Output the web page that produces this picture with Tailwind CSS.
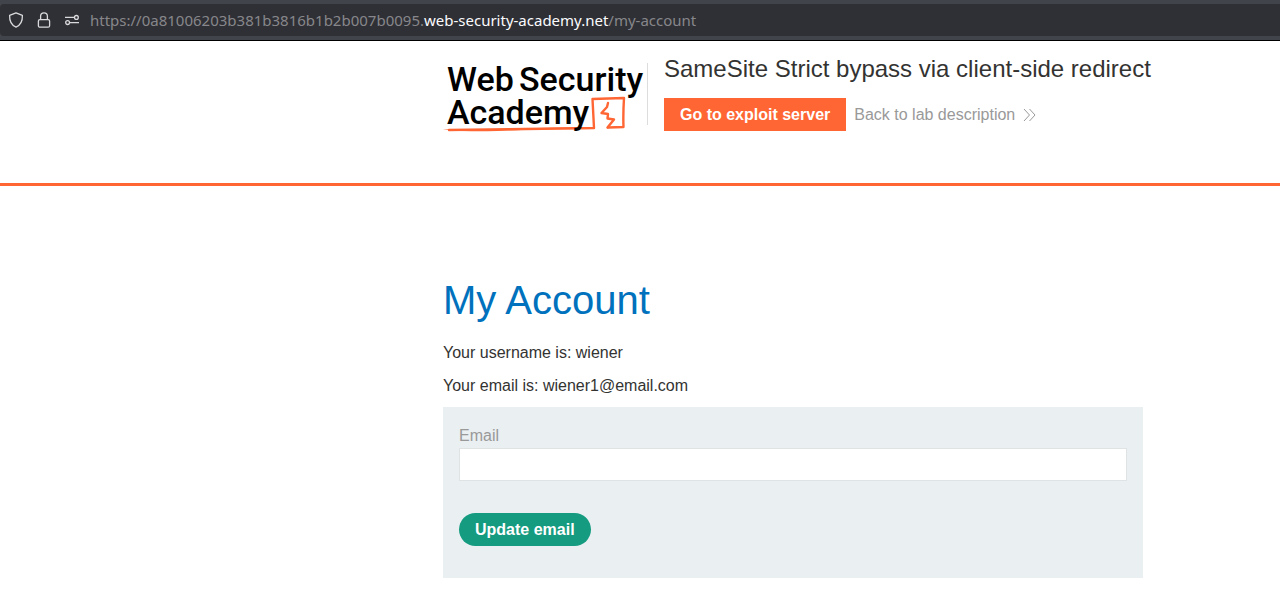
<!DOCTYPE html>
<html lang="en">
<head>
<meta charset="utf-8">
<meta name="viewport" content="width=device-width, initial-scale=1">
<title>SameSite Strict bypass via client-side redirect</title>
<script src="https://cdn.jsdelivr.net/npm/@tailwindcss/browser@4"></script>
</head>
<body class="bg-white text-base text-[#333332] font-['Liberation_Sans',Arial,sans-serif]">
<div class="border-b border-black bg-[#42444b] py-1">
  <div class="flex h-8 items-center rounded-l bg-[#2f3035] pl-2 text-[#dadadc]">
    <svg class="size-4 shrink-0" viewBox="0 0 16 16" fill="none" stroke="currentColor" stroke-width="1.3" stroke-linejoin="round" aria-hidden="true"><path d="M8 .8 14.4 3.3C14.6 8.7 12.6 13.2 8 15.2 3.4 13.2 1.4 8.7 1.6 3.3Z"/></svg>
    <svg class="ml-3 size-4 shrink-0" viewBox="0 0 16 16" fill="none" stroke="currentColor" stroke-width="1.3" aria-hidden="true"><rect x="2.4" y="7.6" width="11.2" height="7.6" rx="1.5"/><path d="M4.6 7.6V4.2a3.4 3.4 0 0 1 6.8 0v3.4"/></svg>
    <svg class="ml-3 size-4 shrink-0" viewBox="0 0 16 16" fill="none" stroke="currentColor" stroke-width="1.3" aria-hidden="true"><circle cx="12.4" cy="5.4" r="1.9"/><path d="M1 5.4h9.500M5.500 10.6H15"/><circle cx="3.6" cy="10.6" r="1.9"/></svg>
    <p class="ml-[10px] whitespace-nowrap text-[15px] text-[#87878b] font-['Noto_Sans',sans-serif]">https://0a81006203b381b3816b1b2b007b0095.<span class="text-[#fbfbfe]">web-security-academy.net</span>/my-account</p>
  </div>
</div>
<header class="border-b-3 border-[#ff6633]">
  <div class="ml-[443px] flex h-[142px] items-start pt-3">
    <a href="#" aria-label="Web Security Academy" class="mt-[10px] shrink-0 border-r border-[#dddddd]">
      <svg class="h-[62px] w-[204px] overflow-visible text-[34px] font-medium font-['Roboto',sans-serif]" viewBox="0 0 204 62">
        <g fill="#000"><text x="4" y="28">Web</text><text x="76" y="28">Security</text></g>
        <g fill="none" stroke="#ff6633" stroke-linejoin="round" stroke-linecap="round">
          <path stroke-width="2.400" d="M6 67Q55 66 151 65L149.500 36 181 35Q180 51 180.500 64L165 64.500"/>
          <path stroke-width="2.400" d="M165 40 164 44 158.500 50 165 51 164.500 55.500 171 56.500 164.500 64.500"/>
        </g>
        <path fill="#ff6633" d="M0 66Q15 67.500 70 65.500L151 64V66Q90 66 55 68Q10 69 0 66Z"/>
        <text x="4" y="61" fill="#000">Academy</text>
      </svg>
    </a>
    <div class="ml-4">
      <h2 class="text-2xl leading-8">SameSite Strict bypass via client-side redirect</h2>
      <div class="mt-[13px] flex items-center gap-2">
        <a href="#" class="bg-[#ff6633] px-4 py-1 font-bold leading-[25px] text-white">Go to exploit server</a>
        <a href="#" class="flex items-center gap-2 text-[#999999]">Back to lab description
          <svg class="h-3 w-[14px]" viewBox="0 0 14 12" fill="none" stroke="currentColor" stroke-width="1" aria-hidden="true"><path d="M1 0 6.500 6 1 12M6.500 0 12 6l-5.500 6"/></svg>
        </a>
      </div>
    </div>
  </div>
</header>
<main class="ml-[443px] mr-4 max-w-[700px] pt-[90px]">
  <h1 class="text-[40px] leading-12 text-[#0071bc]">My Account</h1>
  <p class="mt-4 leading-[25px]">Your username is: wiener</p>
  <p class="mt-2 leading-[25px]">Your email is: wiener1@email.com</p>
  <form class="mt-[9px] bg-[#eaeff2] px-4 pt-4 pb-8">
    <label for="email" class="block leading-[25px] text-[#999999]">Email</label>
    <input id="email" type="email" class="block h-[33px] w-full border border-[#e0e3e3] bg-white px-2">
    <button type="button" class="mt-8 block rounded-full bg-[#159b80] px-4 py-1 font-bold leading-[25px] text-white">Update email</button>
  </form>
</main>
</body>
</html>
